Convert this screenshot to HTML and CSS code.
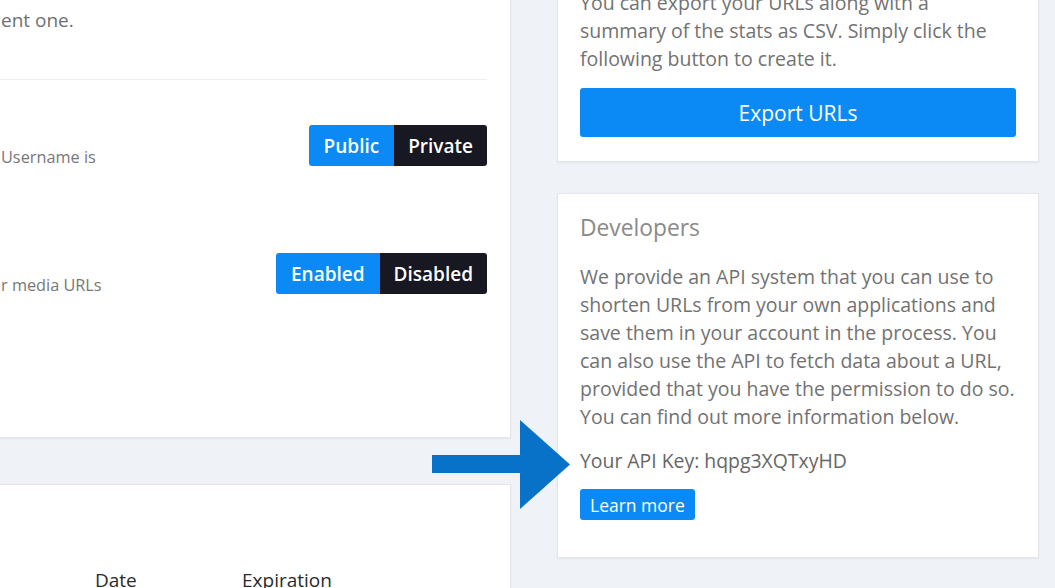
FILE: index.html
```html
<!DOCTYPE html>
<html lang="en">
<head>
<meta charset="utf-8">
<title>Account settings</title>
<link rel="stylesheet" href="styles.css">
</head>
<body>
<div class="page">
  <div class="col-left">
    <section class="card card-settings">
      <p class="intro">ent one.</p>
      <hr class="divider">
      <div class="setting setting-first">
        <p class="setting-desc">Username is</p>
        <div class="toggle">
          <span class="opt opt-on">Public</span><span class="opt opt-off">Private</span>
        </div>
      </div>
      <div class="setting setting-second">
        <p class="setting-desc">r media URLs</p>
        <div class="toggle">
          <span class="opt opt-on">Enabled</span><span class="opt opt-off">Disabled</span>
        </div>
      </div>
    </section>
    <section class="card card-table">
      <div class="thead">
        <span class="th"></span>
        <span class="th">Date</span>
        <span class="th">Expiration</span>
      </div>
    </section>
  </div>
  <div class="col-right">
    <section class="card card-export">
      <p class="text">You can export your URLs along with a summary of the stats as CSV. Simply click the following button to create it.</p>
      <button class="btn btn-block">Export URLs</button>
    </section>
    <section class="card card-dev">
      <h2 class="card-title">Developers</h2>
      <p class="text">We provide an API system that you can use to shorten URLs from your own applications and save them in your account in the process. You can also use the API to fetch data about a URL, provided that you have the permission to do so. You can find out more information below.</p>
      <p class="api-key">Your API Key: hqpg3XQTxyHD</p>
      <button class="btn btn-small">Learn more</button>
    </section>
  </div>
</div>
<svg class="arrow" width="138" height="89" viewBox="0 0 138 89" aria-hidden="true">
  <rect x="0" y="35" width="89" height="18" fill="#0872c9"/>
  <polygon points="88,0 88,89 138,44.5" fill="#0872c9"/>
</svg>
</body>
</html>
```
FILE: styles.css
```css
* { box-sizing: border-box; }
html, body { margin: 0; padding: 0; }
body {
  background: #eff3f7;
  font-family: "Open Sans", "Noto Sans", sans-serif;
  color: #707070;
  width: 1055px;
  height: 588px;
  overflow: hidden;
  position: relative;
}
.page {
  display: flex;
  gap: 46px;
  align-items: flex-start;
}
.card {
  background: #fff;
  border: 1px solid #e3e7ec;
  box-shadow: 0 1px 2px rgba(0,0,0,0.06);
}
.col-left {
  width: 531px;
  margin-left: -20px;
  display: flex;
  flex-direction: column;
  gap: 46px;
  margin-top: -40px;
}
.card-settings {
  padding: 0 23px 0 20px;
  height: 478px;
}
.intro {
  margin: 0;
  padding-top: 45px;
  font-size: 19px;
  line-height: 28px;
  color: #707070;
}
.divider {
  border: 0;
  border-top: 1px solid #eceef1;
  margin: 45px 0 0 -20px;
}
.setting {
  display: flex;
  justify-content: space-between;
  align-items: flex-end;
}
.setting-first { margin-top: 45px; }
.setting-second { margin-top: 87px; }
.setting-desc {
  margin: 0 0 -2px 0;
  font-size: 16.3px;
  line-height: 22px;
  color: #777;
}
.toggle {
  display: flex;
  height: 41px;
  border-radius: 3px;
  overflow: hidden;
}
.opt {
  display: flex;
  align-items: center;
  font-size: 19px;
  font-weight: 600;
  color: #fff;
  padding: 0 14px;
}
.opt-on { background: #0b8af6; padding: 0 15px; }
.opt-off { background: #171821; }
.card-table {
  height: 200px;
  padding: 0 0 0 20px;
}
.thead {
  display: grid;
  grid-template-columns: 94px 147px auto;
  padding-top: 83px;
}
.th {
  font-size: 19px;
  line-height: 24px;
  color: #2b2b2b;
}
.col-right {
  width: 482px;
  display: flex;
  flex-direction: column;
  gap: 31px;
  margin-top: -34px;
}
.card-export { padding: 22px 22px 24px 22px; }
.card-dev { padding: 21px 22px 37px 22px; }
.text {
  margin: 0;
  font-size: 19.5px;
  line-height: 28px;
  color: #727272;
}
.btn {
  font-family: inherit;
  border: 0;
  background: #0b8af6;
  color: #fff;
  border-radius: 3px;
  cursor: pointer;
}
.btn-block {
  display: block;
  width: 100%;
  height: 49px;
  margin-top: 15px;
  font-size: 21px;
}
.card-title {
  margin: 0;
  font-size: 22.8px;
  line-height: 26px;
  font-weight: 400;
  color: #8a8a8a;
}
.card-dev .text { margin-top: 22px; }
.api-key {
  margin: 16px 0 0 0;
  font-size: 19.4px;
  line-height: 28px;
  font-weight: 500;
  color: #666;
}
.btn-small {
  display: block;
  margin-top: 14px;
  height: 31px;
  padding: 0 10px;
  font-size: 17.5px;
}
.arrow {
  position: absolute;
  left: 432px;
  top: 420px;
}
```
